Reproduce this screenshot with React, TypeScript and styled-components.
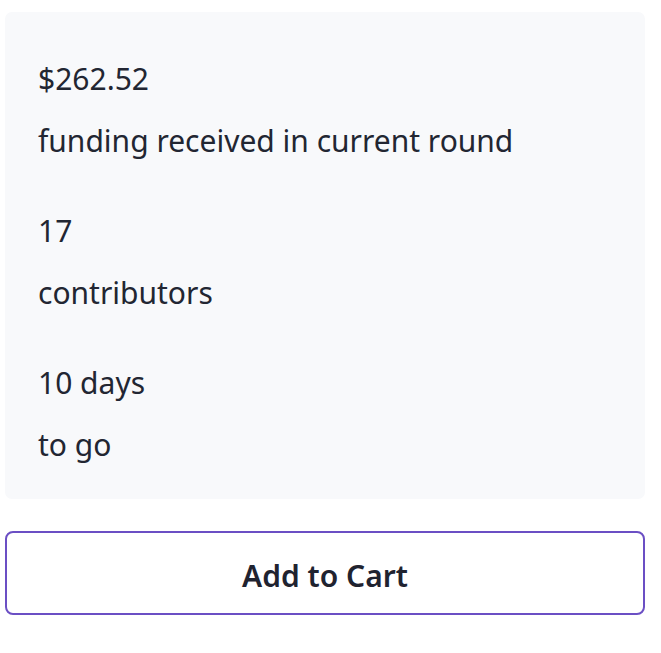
import React from "react";
import styled, { createGlobalStyle } from "styled-components";

const Global = createGlobalStyle`
  html, body { margin: 0; padding: 0; background: #ffffff; }
  body { font-family: "Noto Sans", "Open Sans", sans-serif; color: #222632; }
`;

const Page = styled.div`
  width: 640px;
  padding: 12px 0 0 5px;
  display: flex;
  flex-direction: column;
  gap: 32px;
`;

const Card = styled.div`
  background: #f8f9fb;
  border-radius: 7px;
  padding: 36px 33px 23px;
  display: flex;
  flex-direction: column;
  gap: 28px;
`;

const Stat = styled.div`
  display: flex;
  flex-direction: column;
`;

const Value = styled.div`
  font-size: 30px;
  line-height: 62px;
`;

const Label = styled.div`
  font-size: 30px;
  line-height: 62px;
`;

const CartButton = styled.button`
  height: 84px;
  width: 640px;
  padding: 4px 0 0;
  background: #ffffff;
  border: 2px solid #6b4fc4;
  border-radius: 8px;
  font-family: "Noto Sans", "Open Sans", sans-serif;
  font-weight: 600;
  font-size: 30px;
  color: #1f2330;
  cursor: pointer;
`;

const stats = [
  { value: "$262.52", label: "funding received in current round" },
  { value: "17", label: "contributors" },
  { value: "10 days", label: "to go" },
];

export default function App() {
  return (
    <>
      <Global />
      <Page>
        <Card>
          {stats.map((s) => (
            <Stat key={s.label}>
              <Value>{s.value}</Value>
              <Label>{s.label}</Label>
            </Stat>
          ))}
        </Card>
        <CartButton>Add to Cart</CartButton>
      </Page>
    </>
  );
}
